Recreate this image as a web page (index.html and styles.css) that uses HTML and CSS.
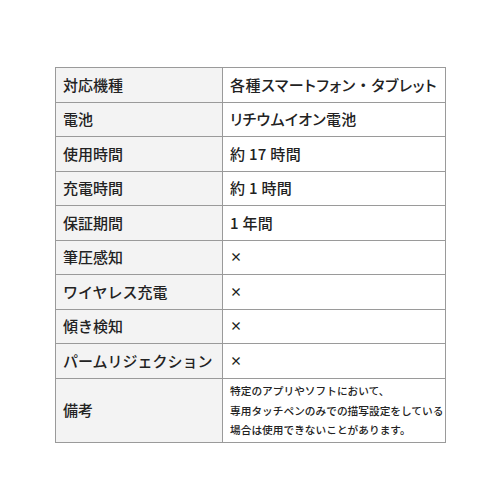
FILE: index.html
```html
<!DOCTYPE html>
<html lang="ja">
<head>
<meta charset="utf-8">
<link rel="stylesheet" href="styles.css">
</head>
<body>
<div class="page">
<table class="spec">
  <colgroup><col class="col-label"><col class="col-value"></colgroup>
  <tbody>
    <tr><th>対応機種</th><td class="wide">各種スマートフォン<span class="dot">・</span>タブレット</td></tr>
    <tr><th>電池</th><td>リチウムイオン電池</td></tr>
    <tr><th>使用時間</th><td>約 17 時間</td></tr>
    <tr><th>充電時間</th><td>約 1 時間</td></tr>
    <tr><th>保証期間</th><td>1 年間</td></tr>
    <tr><th>筆圧感知</th><td class="cross">×</td></tr>
    <tr><th>ワイヤレス充電</th><td class="cross">×</td></tr>
    <tr><th>傾き検知</th><td class="cross">×</td></tr>
    <tr><th>パームリジェクション</th><td class="cross">×</td></tr>
    <tr class="tall"><th>備考</th><td class="note">特定のアプリやソフトにおいて、<br>専用タッチペンのみでの描写設定をしている<br>場合は使用できないことがあります。</td></tr>
  </tbody>
</table>
</div>
</body>
</html>
```
FILE: styles.css
```css
html, body {
  margin: 0;
  padding: 0;
  background: #ffffff;
}
.page {
  padding: 67px 0 0 55px;
}
.spec {
  border-collapse: collapse;
  table-layout: fixed;
  width: 391px;
  font-family: "Noto Sans CJK JP", "Noto Sans", sans-serif;
  color: #222222;
}
.col-label { width: 167px; }
.spec th, .spec td {
  border: 1px solid #9a9a9a;
  height: 34.5px;
  box-sizing: border-box;
  padding: 0 0 0 7px;
  font-size: 15px;
  font-weight: 500;
  text-align: left;
  vertical-align: middle;
  line-height: 20px;
  white-space: nowrap;
}
.spec th {
  background: #f3f3f3;
}
.spec td {
  background: #ffffff;
  font-feature-settings: "palt";
  letter-spacing: 0.3px;
}
.spec td.wide {
  letter-spacing: 0.6px;
}
.spec .dot {
  font-feature-settings: normal;
}
.spec td.cross {
  font-size: 12px;
  font-weight: 700;
  font-feature-settings: normal;
}
.spec tr.tall th, .spec tr.tall td {
  height: 64.5px;
}
.spec td.note {
  font-size: 10.7px;
  line-height: 19.5px;
  padding-top: 0;
  letter-spacing: 0;
  font-feature-settings: normal;
}
```
